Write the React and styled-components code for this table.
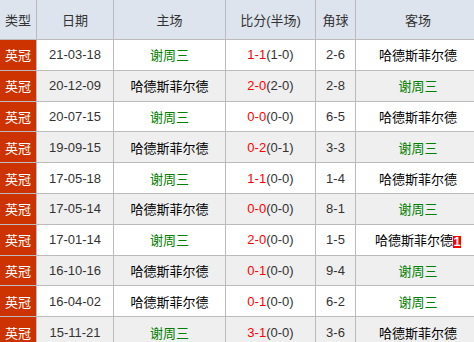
import React from "react";
import styled, { createGlobalStyle } from "styled-components";

const GlobalStyle = createGlobalStyle`
  html, body {
    margin: 0;
    padding: 0;
    overflow: hidden;
    background: #fff;
  }
  body {
    font-family: "Liberation Sans", "Noto Sans CJK SC", sans-serif;
    font-size: 13px;
  }
`;

const matches = [
  { date: "21-03-18", home: "谢周三", score: "1-1", half: "1-0", corner: "2-6", away: "哈德斯菲尔德" },
  { date: "20-12-09", home: "哈德斯菲尔德", score: "2-0", half: "2-0", corner: "2-8", away: "谢周三" },
  { date: "20-07-15", home: "谢周三", score: "0-0", half: "0-0", corner: "6-5", away: "哈德斯菲尔德" },
  { date: "19-09-15", home: "哈德斯菲尔德", score: "0-2", half: "0-1", corner: "3-3", away: "谢周三" },
  { date: "17-05-18", home: "谢周三", score: "1-1", half: "0-0", corner: "1-4", away: "哈德斯菲尔德" },
  { date: "17-05-14", home: "哈德斯菲尔德", score: "0-0", half: "0-0", corner: "8-1", away: "谢周三" },
  { date: "17-01-14", home: "谢周三", score: "2-0", half: "0-0", corner: "1-5", away: "哈德斯菲尔德", awayBadge: "1" },
  { date: "16-10-16", home: "哈德斯菲尔德", score: "0-1", half: "0-0", corner: "9-4", away: "谢周三" },
  { date: "16-04-02", home: "哈德斯菲尔德", score: "0-1", half: "0-0", corner: "6-2", away: "谢周三" },
  { date: "15-11-21", home: "谢周三", score: "3-1", half: "0-0", corner: "3-6", away: "哈德斯菲尔德" },
];

// 谢周三 is shown in green wherever it appears
const FOCUS_TEAM = "谢周三";

function App() {
  return (
    <>
      <GlobalStyle />
      <Table>
        <colgroup>
          <col style={{ width: 37 }} />
          <col style={{ width: 77 }} />
          <col style={{ width: 112 }} />
          <col style={{ width: 90 }} />
          <col style={{ width: 40 }} />
          <col style={{ width: 125 }} />
        </colgroup>
        <thead>
          <tr>
            <HeadCell>类型</HeadCell>
            <HeadCell>日期</HeadCell>
            <HeadCell>主场</HeadCell>
            <HeadCell>比分(半场)</HeadCell>
            <HeadCell>角球</HeadCell>
            <HeadCell>客场</HeadCell>
          </tr>
        </thead>
        <tbody>
          {matches.map((m, i) => (
            <Row key={m.date} $even={i % 2 === 1}>
              <TypeCell>英冠</TypeCell>
              <Cell>{m.date}</Cell>
              <TeamCell $focus={m.home === FOCUS_TEAM}>{m.home}</TeamCell>
              <Cell>
                <Score>{m.score}</Score>({m.half})
              </Cell>
              <Cell>{m.corner}</Cell>
              <TeamCell $focus={m.away === FOCUS_TEAM}>
                {m.away}
                {m.awayBadge && <Badge>{m.awayBadge}</Badge>}
              </TeamCell>
            </Row>
          ))}
        </tbody>
      </Table>
    </>
  );
}

const Table = styled.table`
  width: 481px;
  table-layout: fixed;
  border-collapse: separate;
  border-spacing: 0;
  color: #333;
`;

const HeadCell = styled.th`
  height: 39px;
  padding: 0;
  background: #dde4ed;
  font-weight: normal;
  text-align: center;
  vertical-align: middle;
  white-space: nowrap;
  border-right: 1px solid #bbb;
  border-bottom: 1px solid #bbb;
`;

const Row = styled.tr`
  height: 30.8px;
  background: ${(p) => (p.$even ? "#efefef" : "#fff")};
`;

const Cell = styled.td`
  padding: 0;
  text-align: center;
  vertical-align: middle;
  white-space: nowrap;
  border-right: 1px solid #bbb;
  border-bottom: 1px solid #bbb;
`;

const TypeCell = styled(Cell)`
  background: #cc3300;
  color: #fff;
`;

const TeamCell = styled(Cell)`
  color: ${(p) => (p.$focus ? "#008000" : "#000")};
`;

const Score = styled.span`
  color: #f00;
`;

const Badge = styled.span`
  display: inline-block;
  width: 8px;
  height: 12px;
  background: #f00;
  color: #fff;
  font-size: 13px;
  font-weight: bold;
  line-height: 12px;
  text-align: center;
  vertical-align: -1px;
`;

export default App;
